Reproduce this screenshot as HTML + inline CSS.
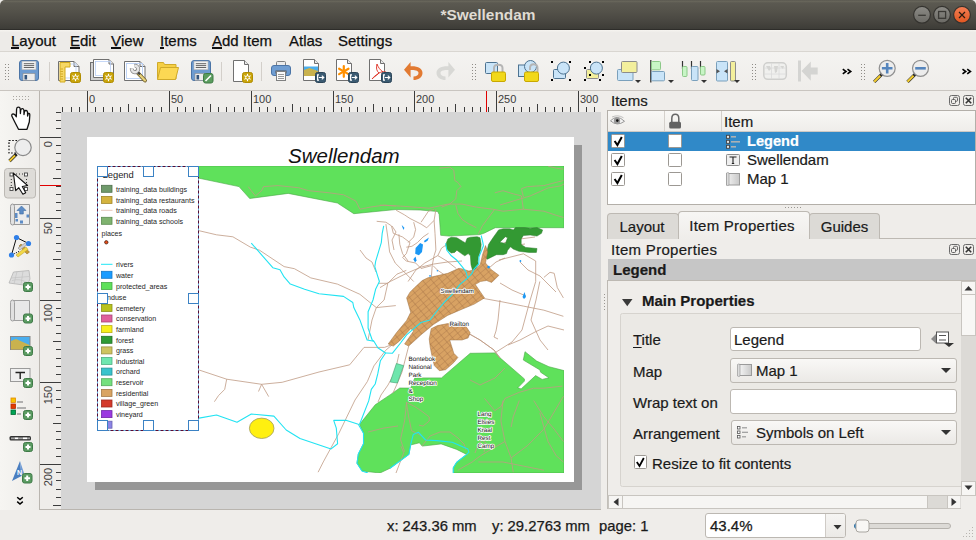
<!DOCTYPE html>
<html><head><meta charset="utf-8">
<style>
*{box-sizing:border-box;margin:0;padding:0}
html,body{width:976px;height:540px;overflow:hidden;background:#efedea;font-family:"Liberation Sans",sans-serif;color:#3c3c3c;position:relative}
.a{position:absolute}
#title{left:0;top:0;width:976px;height:30px;background:linear-gradient(#5a5850 0%,#67655a 5%,#5b5951 10%,#55534b 35%,#4a4842 68%,#3d3c37 100%);border-bottom:1px solid #2e2d2a;border-radius:5px 5px 0 0}
#title .t{left:0;width:976px;top:6px;text-align:center;font-weight:bold;font-size:15.4px;color:#dfdbd2;letter-spacing:0}
.wb{width:17px;height:17px;border-radius:50%;top:6px;border:1px solid #3a3935}
#menu{left:0;top:30px;width:976px;height:22px;background:linear-gradient(#f6f4f0,#edebe8 12%,#edebe8);border-bottom:1px solid #d9d6d1}
#menu span{position:absolute;top:2px;font-size:15px;color:#101010;-webkit-text-stroke:0.25px #101010}
#menu u{text-decoration:none;border-bottom:2px solid #101010;display:inline-block;line-height:12px}
#tb{left:0;top:52px;width:976px;height:38px;background:linear-gradient(#f4f3f1,#efedea)}
#lb{left:0;top:90px;width:39px;height:420px;background:linear-gradient(90deg,#f6f5f2,#eeece9)}
.rt{font-family:"Liberation Sans";font-size:11px;fill:#3c3c3c}
#status{left:0;top:510px;width:976px;height:30px;background:#efedea}
#status span{position:absolute;top:8px;font-size:14.8px;color:#1a1a1a;-webkit-text-stroke:0.25px #1a1a1a}
.pt{font-size:15px;color:#1a1a1a;line-height:18px;-webkit-text-stroke:0.2px #1a1a1a}
.tx{font-size:15px;color:#1a1a1a;line-height:18px;white-space:nowrap;-webkit-text-stroke:0.2px currentColor}
.tab{-webkit-text-stroke:0.2px #1a1a1a;height:26px;border:1px solid #bdb9b3;border-bottom:none;border-radius:4px 4px 0 0;background:#dcdad6;font-size:15px;color:#1a1a1a;text-align:center;line-height:25px}
.tab.act{height:28px;background:linear-gradient(#f7f6f4,#efedea);line-height:27px;z-index:2;letter-spacing:0.25px;text-indent:-4px}
.inp{background:#fff;border:1px solid #bcb8b2;border-radius:3px}
.cmb{background:linear-gradient(#f9f8f6,#ebe9e6);border:1px solid #bcb8b2;border-radius:3px}
</style></head><body>
<div id="title" class="a"><div class="t a">*Swellendam</div>
<svg class="a" style="left:900px;top:0" width="76" height="30">
<defs><linearGradient id="gbtn" x1="0" y1="0" x2="0" y2="1"><stop offset="0" stop-color="#8c8b86"/><stop offset="1" stop-color="#6a6964"/></linearGradient>
<linearGradient id="obtn" x1="0" y1="0" x2="0" y2="1"><stop offset="0" stop-color="#f57f55"/><stop offset="1" stop-color="#e05620"/></linearGradient></defs>
<circle cx="22" cy="14.8" r="8.4" fill="url(#gbtn)" stroke="#34332f" stroke-width="1.2"/>
<line x1="18.2" y1="15.3" x2="25.8" y2="15.3" stroke="#3a3935" stroke-width="1.3"/>
<circle cx="42" cy="14.8" r="8.4" fill="url(#gbtn)" stroke="#34332f" stroke-width="1.2"/>
<rect x="38.6" y="11.5" width="7" height="6.8" fill="none" stroke="#3a3935" stroke-width="1.3"/>
<circle cx="62" cy="14.8" r="8.4" fill="url(#obtn)" stroke="#34332f" stroke-width="1.2"/>
<path d="M59 12 L65 18 M65 12 L59 18" stroke="#2a1a10" stroke-width="1.2"/>
</svg>
</div>
<div id="menu" class="a">
<span style="left:11px"><u>L</u>ayout</span>
<span style="left:70px"><u>E</u>dit</span>
<span style="left:111px"><u>V</u>iew</span>
<span style="left:160px"><u>I</u>tems</span>
<span style="left:212px"><u>A</u>dd Item</span>
<span style="left:289px">Atlas</span>
<span style="left:338px">Settings</span>
</div>
<div id="tb" class="a"></div>
<div id="lb" class="a"></div>
<!-- rulers + canvas -->
<svg class="a" style="left:0;top:0" width="976" height="540">
<rect x="39" y="90" width="562" height="420" fill="#efedea"/>
<line x1="39.5" y1="90" x2="39.5" y2="510" stroke="#b9b5af"/>
<line x1="0" y1="90.5" x2="976" y2="90.5" stroke="#c9c5c0"/>
<line x1="40" y1="509.5" x2="601" y2="509.5" stroke="#b9b5af"/>
<rect x="61" y="112" width="540" height="397" fill="#d5d5d5"/>
<rect x="95" y="145" width="487" height="345" fill="#979797"/>
<rect x="87" y="137" width="487" height="345" fill="#ffffff"/>
<line x1="62.5" y1="107" x2="62.5" y2="112" stroke="#3c3c3c"/>
<line x1="71.5" y1="107" x2="71.5" y2="112" stroke="#3c3c3c"/>
<line x1="79.5" y1="107" x2="79.5" y2="112" stroke="#3c3c3c"/>
<line x1="87.5" y1="91" x2="87.5" y2="112" stroke="#3c3c3c" stroke-width="1"/>
<text x="89" y="103" class="rt">0</text>
<line x1="95.5" y1="107" x2="95.5" y2="112" stroke="#3c3c3c"/>
<line x1="103.5" y1="107" x2="103.5" y2="112" stroke="#3c3c3c"/>
<line x1="112.5" y1="107" x2="112.5" y2="112" stroke="#3c3c3c"/>
<line x1="120.5" y1="107" x2="120.5" y2="112" stroke="#3c3c3c"/>
<line x1="128.5" y1="104" x2="128.5" y2="112" stroke="#3c3c3c"/>
<line x1="136.5" y1="107" x2="136.5" y2="112" stroke="#3c3c3c"/>
<line x1="144.5" y1="107" x2="144.5" y2="112" stroke="#3c3c3c"/>
<line x1="152.5" y1="107" x2="152.5" y2="112" stroke="#3c3c3c"/>
<line x1="161.5" y1="107" x2="161.5" y2="112" stroke="#3c3c3c"/>
<line x1="169.5" y1="91" x2="169.5" y2="112" stroke="#3c3c3c" stroke-width="1"/>
<text x="171" y="103" class="rt">50</text>
<line x1="177.5" y1="107" x2="177.5" y2="112" stroke="#3c3c3c"/>
<line x1="185.5" y1="107" x2="185.5" y2="112" stroke="#3c3c3c"/>
<line x1="193.5" y1="107" x2="193.5" y2="112" stroke="#3c3c3c"/>
<line x1="202.5" y1="107" x2="202.5" y2="112" stroke="#3c3c3c"/>
<line x1="210.5" y1="104" x2="210.5" y2="112" stroke="#3c3c3c"/>
<line x1="218.5" y1="107" x2="218.5" y2="112" stroke="#3c3c3c"/>
<line x1="226.5" y1="107" x2="226.5" y2="112" stroke="#3c3c3c"/>
<line x1="234.5" y1="107" x2="234.5" y2="112" stroke="#3c3c3c"/>
<line x1="243.5" y1="107" x2="243.5" y2="112" stroke="#3c3c3c"/>
<line x1="251.5" y1="91" x2="251.5" y2="112" stroke="#3c3c3c" stroke-width="1"/>
<text x="253" y="103" class="rt">100</text>
<line x1="259.5" y1="107" x2="259.5" y2="112" stroke="#3c3c3c"/>
<line x1="267.5" y1="107" x2="267.5" y2="112" stroke="#3c3c3c"/>
<line x1="275.5" y1="107" x2="275.5" y2="112" stroke="#3c3c3c"/>
<line x1="283.5" y1="107" x2="283.5" y2="112" stroke="#3c3c3c"/>
<line x1="292.5" y1="104" x2="292.5" y2="112" stroke="#3c3c3c"/>
<line x1="300.5" y1="107" x2="300.5" y2="112" stroke="#3c3c3c"/>
<line x1="308.5" y1="107" x2="308.5" y2="112" stroke="#3c3c3c"/>
<line x1="316.5" y1="107" x2="316.5" y2="112" stroke="#3c3c3c"/>
<line x1="324.5" y1="107" x2="324.5" y2="112" stroke="#3c3c3c"/>
<line x1="333.5" y1="91" x2="333.5" y2="112" stroke="#3c3c3c" stroke-width="1"/>
<text x="335" y="103" class="rt">150</text>
<line x1="341.5" y1="107" x2="341.5" y2="112" stroke="#3c3c3c"/>
<line x1="349.5" y1="107" x2="349.5" y2="112" stroke="#3c3c3c"/>
<line x1="357.5" y1="107" x2="357.5" y2="112" stroke="#3c3c3c"/>
<line x1="365.5" y1="107" x2="365.5" y2="112" stroke="#3c3c3c"/>
<line x1="373.5" y1="104" x2="373.5" y2="112" stroke="#3c3c3c"/>
<line x1="382.5" y1="107" x2="382.5" y2="112" stroke="#3c3c3c"/>
<line x1="390.5" y1="107" x2="390.5" y2="112" stroke="#3c3c3c"/>
<line x1="398.5" y1="107" x2="398.5" y2="112" stroke="#3c3c3c"/>
<line x1="406.5" y1="107" x2="406.5" y2="112" stroke="#3c3c3c"/>
<line x1="414.5" y1="91" x2="414.5" y2="112" stroke="#3c3c3c" stroke-width="1"/>
<text x="416" y="103" class="rt">200</text>
<line x1="423.5" y1="107" x2="423.5" y2="112" stroke="#3c3c3c"/>
<line x1="431.5" y1="107" x2="431.5" y2="112" stroke="#3c3c3c"/>
<line x1="439.5" y1="107" x2="439.5" y2="112" stroke="#3c3c3c"/>
<line x1="447.5" y1="107" x2="447.5" y2="112" stroke="#3c3c3c"/>
<line x1="455.5" y1="104" x2="455.5" y2="112" stroke="#3c3c3c"/>
<line x1="464.5" y1="107" x2="464.5" y2="112" stroke="#3c3c3c"/>
<line x1="472.5" y1="107" x2="472.5" y2="112" stroke="#3c3c3c"/>
<line x1="480.5" y1="107" x2="480.5" y2="112" stroke="#3c3c3c"/>
<line x1="488.5" y1="107" x2="488.5" y2="112" stroke="#3c3c3c"/>
<line x1="496.5" y1="91" x2="496.5" y2="112" stroke="#3c3c3c" stroke-width="1"/>
<text x="498" y="103" class="rt">250</text>
<line x1="504.5" y1="107" x2="504.5" y2="112" stroke="#3c3c3c"/>
<line x1="513.5" y1="107" x2="513.5" y2="112" stroke="#3c3c3c"/>
<line x1="521.5" y1="107" x2="521.5" y2="112" stroke="#3c3c3c"/>
<line x1="529.5" y1="107" x2="529.5" y2="112" stroke="#3c3c3c"/>
<line x1="537.5" y1="104" x2="537.5" y2="112" stroke="#3c3c3c"/>
<line x1="545.5" y1="107" x2="545.5" y2="112" stroke="#3c3c3c"/>
<line x1="554.5" y1="107" x2="554.5" y2="112" stroke="#3c3c3c"/>
<line x1="562.5" y1="107" x2="562.5" y2="112" stroke="#3c3c3c"/>
<line x1="570.5" y1="107" x2="570.5" y2="112" stroke="#3c3c3c"/>
<line x1="578.5" y1="91" x2="578.5" y2="112" stroke="#3c3c3c" stroke-width="1"/>
<text x="580" y="103" class="rt">300</text>
<line x1="586.5" y1="107" x2="586.5" y2="112" stroke="#3c3c3c"/>
<line x1="594.5" y1="107" x2="594.5" y2="112" stroke="#3c3c3c"/>
<line x1="56" y1="112.5" x2="61" y2="112.5" stroke="#3c3c3c"/>
<line x1="56" y1="120.5" x2="61" y2="120.5" stroke="#3c3c3c"/>
<line x1="56" y1="128.5" x2="61" y2="128.5" stroke="#3c3c3c"/>
<line x1="40" y1="137.5" x2="61" y2="137.5" stroke="#3c3c3c"/>
<text transform="translate(52,141) rotate(-90)" text-anchor="end" class="rt">0</text>
<line x1="56" y1="145.5" x2="61" y2="145.5" stroke="#3c3c3c"/>
<line x1="56" y1="153.5" x2="61" y2="153.5" stroke="#3c3c3c"/>
<line x1="56" y1="161.5" x2="61" y2="161.5" stroke="#3c3c3c"/>
<line x1="56" y1="169.5" x2="61" y2="169.5" stroke="#3c3c3c"/>
<line x1="53" y1="178.5" x2="61" y2="178.5" stroke="#3c3c3c"/>
<line x1="56" y1="186.5" x2="61" y2="186.5" stroke="#3c3c3c"/>
<line x1="56" y1="194.5" x2="61" y2="194.5" stroke="#3c3c3c"/>
<line x1="56" y1="202.5" x2="61" y2="202.5" stroke="#3c3c3c"/>
<line x1="56" y1="210.5" x2="61" y2="210.5" stroke="#3c3c3c"/>
<line x1="40" y1="218.5" x2="61" y2="218.5" stroke="#3c3c3c"/>
<text transform="translate(52,222) rotate(-90)" text-anchor="end" class="rt">50</text>
<line x1="56" y1="227.5" x2="61" y2="227.5" stroke="#3c3c3c"/>
<line x1="56" y1="235.5" x2="61" y2="235.5" stroke="#3c3c3c"/>
<line x1="56" y1="243.5" x2="61" y2="243.5" stroke="#3c3c3c"/>
<line x1="56" y1="251.5" x2="61" y2="251.5" stroke="#3c3c3c"/>
<line x1="53" y1="259.5" x2="61" y2="259.5" stroke="#3c3c3c"/>
<line x1="56" y1="268.5" x2="61" y2="268.5" stroke="#3c3c3c"/>
<line x1="56" y1="276.5" x2="61" y2="276.5" stroke="#3c3c3c"/>
<line x1="56" y1="284.5" x2="61" y2="284.5" stroke="#3c3c3c"/>
<line x1="56" y1="292.5" x2="61" y2="292.5" stroke="#3c3c3c"/>
<line x1="40" y1="300.5" x2="61" y2="300.5" stroke="#3c3c3c"/>
<text transform="translate(52,304) rotate(-90)" text-anchor="end" class="rt">100</text>
<line x1="56" y1="308.5" x2="61" y2="308.5" stroke="#3c3c3c"/>
<line x1="56" y1="317.5" x2="61" y2="317.5" stroke="#3c3c3c"/>
<line x1="56" y1="325.5" x2="61" y2="325.5" stroke="#3c3c3c"/>
<line x1="56" y1="333.5" x2="61" y2="333.5" stroke="#3c3c3c"/>
<line x1="53" y1="341.5" x2="61" y2="341.5" stroke="#3c3c3c"/>
<line x1="56" y1="349.5" x2="61" y2="349.5" stroke="#3c3c3c"/>
<line x1="56" y1="358.5" x2="61" y2="358.5" stroke="#3c3c3c"/>
<line x1="56" y1="366.5" x2="61" y2="366.5" stroke="#3c3c3c"/>
<line x1="56" y1="374.5" x2="61" y2="374.5" stroke="#3c3c3c"/>
<line x1="40" y1="382.5" x2="61" y2="382.5" stroke="#3c3c3c"/>
<text transform="translate(52,386) rotate(-90)" text-anchor="end" class="rt">150</text>
<line x1="56" y1="390.5" x2="61" y2="390.5" stroke="#3c3c3c"/>
<line x1="56" y1="399.5" x2="61" y2="399.5" stroke="#3c3c3c"/>
<line x1="56" y1="407.5" x2="61" y2="407.5" stroke="#3c3c3c"/>
<line x1="56" y1="415.5" x2="61" y2="415.5" stroke="#3c3c3c"/>
<line x1="53" y1="423.5" x2="61" y2="423.5" stroke="#3c3c3c"/>
<line x1="56" y1="431.5" x2="61" y2="431.5" stroke="#3c3c3c"/>
<line x1="56" y1="439.5" x2="61" y2="439.5" stroke="#3c3c3c"/>
<line x1="56" y1="448.5" x2="61" y2="448.5" stroke="#3c3c3c"/>
<line x1="56" y1="456.5" x2="61" y2="456.5" stroke="#3c3c3c"/>
<line x1="40" y1="464.5" x2="61" y2="464.5" stroke="#3c3c3c"/>
<text transform="translate(52,468) rotate(-90)" text-anchor="end" class="rt">200</text>
<line x1="56" y1="472.5" x2="61" y2="472.5" stroke="#3c3c3c"/>
<line x1="56" y1="480.5" x2="61" y2="480.5" stroke="#3c3c3c"/>
<line x1="56" y1="489.5" x2="61" y2="489.5" stroke="#3c3c3c"/>
<line x1="56" y1="497.5" x2="61" y2="497.5" stroke="#3c3c3c"/>
<line x1="53" y1="505.5" x2="61" y2="505.5" stroke="#3c3c3c"/>
<line x1="486.5" y1="91" x2="486.5" y2="112" stroke="#e00000"/>
<line x1="40" y1="185.5" x2="61" y2="185.5" stroke="#e00000"/>
<defs>
<clipPath id="mapclip"><rect x="97" y="166" width="467" height="307"/></clipPath>
<pattern id="town" patternUnits="userSpaceOnUse" width="7" height="4.5" patternTransform="rotate(-40)"><rect width="7" height="4.5" fill="#d8a263"/><path d="M0 0.3 H7 M3.5 0 V4.5" stroke="#a87448" stroke-width="0.45"/></pattern>
</defs>
<g clip-path="url(#mapclip)">
<rect x="97" y="166" width="467" height="307" fill="#fff"/>
<!-- protected area top -->
<path d="M97 166 H564 V227.7 H495.3 L489.2 230.7 L484.5 233 L480 234.6 L449.2 236.1 L440.7 235.3 L439.2 214.6 L437.7 211.5 L420 210 L396 209.5 L353.8 213.7 L337.4 203 L288.2 193.4 L249.7 198.5 L239 186.6 L198 178 L97 160 Z" fill="#5fe15b" stroke="#4aa847" stroke-width="0.6"/>
<!-- protected area bottom -->
<path d="M357 463.2 L358.3 454 L363.5 443.7 L363.5 433.3 L359.6 424.3 L375.2 404.8 L390.7 394.4 L399.8 388 L410.7 388.1 L414.8 377.9 L441.5 377.9 L470.2 353.3 L494.8 352.9 L500 357.8 L524.4 378.9 L524.4 381.1 L517.8 387.8 L521.1 388.9 L535.6 375.6 L542.2 379.4 L548.9 377.8 L540.6 372.2 L540 370 L523.3 360 L525 351.7 L536.7 361.1 L548.9 366.7 L564 370.6 V473 H453.3 L453.3 467.8 L456.7 462.2 L466.7 454.4 L456.7 449.4 L441.1 443.9 L432.2 445 L422.2 446.1 L419.4 442.8 L410.6 445 L408.9 454.4 L390 468.3 L380 473 L362 471 Z" fill="#5fe15b" stroke="#4aa847" stroke-width="0.6"/>
<!-- roads -->
<g fill="none" stroke="#bf9a84" stroke-width="0.8" stroke-linejoin="round">
<path d="M199 230.7 L216.5 234.8 L232.9 236.8 L250.3 247.1 L259.5 250.2 L284.1 266.6 L294.4 268.7 L310.8 277.9 L337.4 284.1 L359.9 294.3 L376.3 307.6 L395.8 305.6"/>
<path d="M199.1 370 L226.7 379.2 L261.6 384.3 L282.1 382.3 L319 372 L349.7 364.8 L364 347.4 L384.5 347.4 L392.7 344.3"/>
<path d="M226.7 379.2 L224.7 389.4 L218.5 395.6 L214.4 401.7"/><path d="M261.6 384.3 L258.5 391.5"/><path d="M261.6 384.3 L268.7 396.6"/>
<path d="M376.7 221.3 L385.9 222.2 L391.5 225.9 L393.3 233.3 L402.6 237 L410 242.6 L406.3 253.7 L402.6 257.4 L406.3 261.1 L415.6 263 L421.1 268.5 L431.3 265.7"/>
<path d="M396.1 210.2 L404.4 214.8 L410 218.5 L421.1 224.1 L426.7 227.8 L434.1 220.4 L435.9 209.3"/>
<path d="M434.1 220.4 L435 233.3 L435.9 250 L434.1 255.6 L432.2 265.7 L431.3 277.8 L430.4 281.5"/>
<path d="M385.9 224.1 L387.8 237 L389.6 251.9 L395.2 263 L402.6 270.4 L410 277.8 L413.7 281.5"/>
<path d="M378.5 283.3 L387.8 283.3 L397 274.1 L406.3 270.4"/>
<path d="M408.1 281.5 L415.6 270.4 L424.8 263 L437.8 255.6 L447 261.1 L456.3 268.5"/>
<path d="M387.8 283.3 L384.1 300 L376.3 307.6 L372 320 L368 340"/>
<path d="M380 287.6 L390.2 281.5 L406.6 273.3 L421 267.1 L433.3 264.1 L447.6 262 L462 261"/>
<path d="M480.4 297.9 L503 302 L523.4 306.1 L543.9 310.2 L563.4 316.3"/>
<path d="M498.9 260 L523.4 253.8 L535.7 261 L535.7 281.5 L529.6 302 L522 330 L512 342 L494.8 352.9"/>
<path d="M543.9 277.4 L550 272.3 L554.2 273.3 L557.3 287.6 L563.4 297.9"/>
<path d="M539.8 281.5 L536 300 L531 320 L540 340 L548 350"/>
<path d="M500 300 L498 320 L496 331 L494 337 L498 339"/>
<path d="M408.7 346.1 L402 372 L397 384 L393 393"/>
<path d="M430 338 L440 330 L455 324"/>
<path d="M466 332 L480 340 L494 350 L500 358"/>
<path d="M439.4 168.2 L449.7 167.2 L453.8 170.2 L454.8 180.5 L457.9 182.5 L460.9 186.6 L456.8 190.7 L455.8 198.9 L449.7 204.1 L441.5 207.1"/>
<path d="M380 205.1 L400.5 206.1 L429.2 208.2 L447.6 204.1 L462 204.1 L476.3 207.1 L492.7 209.2 L503 211.2 L523.4 209.2 L543.9 211.2 L556.2 215.3 L563.4 217.4"/>
<path d="M523.4 196.9 L521.4 188.7 L527.5 186.6 L543.9 185.6 L563.4 180.5"/>
<path d="M494.8 209.2 L488.6 217.4 L482.5 225.6 L478.4 233.8"/>
<path d="M455.8 205.1 L457.9 213.3 L462 219.4 L468.1 223.5 L476.3 227.6"/>
<path d="M548 166.1 L556.2 168.2 L563.4 169.2"/>
<path d="M494.8 192.8 L503 190.7 L513.2 193.8 L521.4 195.9 L523.4 209.2"/>
<path d="M248.3 186.6 L251.3 190.7 L255.4 195.9 L261.6 190.7 L263.6 186.6 L278 185.6 L298.5 187.7 L308.7 190.7 L329.2 192.8 L343.5 194.8 L355.8 201 L359.9 209.2 L370.2 207.1 L384.5 205.1 L395.8 206.1"/>
<path d="M406.6 402.5 L414.8 406.6 L421 410.7 L429.2 416.9 L429.2 421 L423 426.1 L418.9 425.1"/>
<path d="M406.6 402.5 L404.6 421 L400.5 439.4 L404.6 451.7"/>
<path d="M484.5 398.4 L494.8 410.7 L500.9 406.6 L505 398.4 L519.3 392.3 L533.7 388.2 L543.9 388.2 L562.4 386.1"/>
<path d="M503 400.5 L500.9 421 L505 441.5 L511.1 457.9 L513.2 472.2"/>
<path d="M511.1 457.9 L527.5 445.6 L543.9 429.2 L563.4 396.4"/>
<path d="M533.7 400.5 L543.9 416.9 L554.2 429.2 L563.4 441.5"/>
<path d="M519.3 400.5 L513.2 416.9 L511.1 427.1"/>
<path d="M478.4 462 L503 462 L523.4 466.1 L543.9 470.2"/>
<path d="M539.8 412.8 L548 441.5 L556.2 455.8 L563.4 462"/>
<path d="M457.9 470.2 L472.2 462 L480.4 455.8 L490 450 L505 441.5"/>
<path d="M406.3 402.2 L408.9 417.8 L411.5 430.7 L421.9 435.9"/>
<path d="M401.1 446.3 L403.7 452.8 L396 473"/>
<path d="M422 446 L430 436 L440 432 L450 432 L458 438 L464 444 L466 450"/>
<path d="M475 453 L478 445 L482 440 L486 443 L484 452"/>
<path d="M392.7 344.3 L385.6 350.4 L373.9 365.9 L367.4 381.5 L355 400 L338.9 433.3 L323.3 461.9 L318.1 472.2"/>
<path d="M399 354 L395 372 L388 385 L381 395 L378 402"/>
<path d="M430 338 L440 330 L455 324"/>
<path d="M466 332 L480 340 L494 350 L500 358"/>
<path d="M500 205 L530 196 L548 188 L560 186 L564 184"/>
<path d="M504 243 L520 239 L535 237"/>
<path d="M499 253 L510 246 L525 244"/>
<path d="M470 380 L480 385 L495 378 L505 368"/>
<path d="M368 432 L384 428 L398 426"/>
<path d="M398.9 234.3 L399.8 244.4 L402.6 253.7 L408.1 261.1"/>
<path d="M421.1 222.2 L428.5 211.1 L434.1 209.3"/>
<path d="M413.7 222.2 L415.6 229.6 L413.7 237 L408.1 242.6"/>
<path d="M428.5 233.3 L423 237 L417.4 242.6 L411.9 246.3 L406.3 247.2"/>
<path d="M437.8 255.6 L441.5 248.1 L447 244.4"/>
<path d="M433.1 265.7 L437.8 270.4 L443.3 274.1 L448 277.8"/>
<path d="M392 226 L396 232 L392 240 L394 250"/>
<path d="M360 250 L366 258 L372 262 L376 272"/>
<path d="M520 262 L528 270 L540 276 L548 284 L556 292"/>
<path d="M500 283 L512 290 L526 296"/>
<path d="M489 268 L496 262 L505 258"/>
<path d="M564 330 L548 326 L535 332 L520 340 L508 345"/>
</g>
<!-- forest -->
<g fill="#339933" stroke="#2a7a2a" stroke-width="0.5" fill-rule="evenodd">
<path d="M446.2 243.4 L447.9 238.9 L451.3 237.2 L456.9 237.8 L462.5 241.2 L465.4 242.9 L467.1 238.3 L470.4 237.2 L477.2 236.7 L480 237.8 L481.2 244.5 L480.6 250.2 L478.3 257 L477.8 261.5 L478.3 264.8 L475 269.4 L472.7 270.5 L471 264.8 L470.4 255.8 L468.2 253.6 L464.8 255.8 L461.4 253.6 L456.9 250.2 L454.7 252.4 L451.3 253 L447.9 250.2 L446.2 246.8 Z"/>
<path d="M486.2 254.7 L488.5 244.5 L493 237.8 L498.6 229.9 L503.1 228.8 L509.9 228.8 L513.3 229.9 L515.5 227.6 L524.6 227.6 L530.2 228.2 L537 227.6 L542.6 229.9 L541.5 233.3 L537 236.1 L530.2 235 L523.4 235.5 L521.2 238.9 L521.2 244.5 L525.7 247.4 L537 248.5 L536.4 252.4 L529.1 252.4 L518.9 251.3 L513.3 249.1 L510.5 246.8 L507.6 250.2 L506.5 253.6 L503.1 254.7 L496.4 254.7 L491.9 256.9 L487.4 259.2 L485.7 258.1 Z M499.8 242.3 L505.4 236.7 L507.6 237.8 L505.4 243.4 Z"/>
</g>
<!-- town -->
<g fill="url(#town)" stroke="#9a6e40" stroke-width="0.5">
<path d="M406.6 297.9 L410 292.2 L414.4 287.8 L422.2 280.6 L427.8 277.8 L437.8 275.6 L447.8 273.3 L458.9 268.3 L462.2 268.9 L468.9 271.1 L475.6 269.4 L480.4 264 L482.5 254.8 L485.5 245.6 L487.6 251.8 L485.5 263 L490.7 269.2 L498.9 275.3 L491.7 282.5 L486.6 280.5 L480.4 281.5 L475.3 284.5 L484.5 297.9 L474.3 304.1 L462 309.2 L447.6 315.4 L433.3 324.6 L421 334.8 L408.7 346.1 L404.6 344 L413.8 330.7 L410.7 328.7 L399.5 341 L393.3 346.1 L388.2 344 L396.4 332.8 L406.6 320.5 L410.7 312.3 Z"/>
<path d="M431.2 328.7 L437.4 325.6 L447.6 323.6 L466.1 326.6 L470.2 332.8 L468.1 337.9 L462 340 L449.7 340 L453.8 353.3 L457.9 357.4 L453.8 362.5 L445.6 369.7 L439.4 370.7 L434.3 365.6 L432.3 357.4 L430.2 347.1 L429.2 338.9 Z"/>
</g>
<!-- industrial -->
<path d="M390.2 382 L396.4 363.5 L403.6 365.6 L397.4 383 Z" fill="#6fe6ad" stroke="#3f9f6e" stroke-width="0.6"/>
<!-- water -->
<g fill="#1b98f5">
<path d="M415.6 248.1 L420.2 243 L423 244.4 L422 251.9 L418.9 255.2 L415.2 253.7 Z"/>
<path d="M423.9 241.1 L428.9 237.4 L427.6 240.7 L424.8 242.6 Z"/>
<path d="M413.3 259.3 L415.6 256.5 L416.5 260.2 L415.2 262.6 Z"/>
<path d="M401.7 225 L404.4 227.8 L403.5 230 L402.5 227.5 Z"/>
<circle cx="430" cy="275.9" r="0.8"/><circle cx="437.4" cy="270.7" r="0.8"/><circle cx="488.6" cy="267.1" r="1.3"/><circle cx="520.4" cy="261" r="0.9"/>
<path d="M524.5 292 L526 297 L524 299 L522.5 297 Z"/>
</g>
<!-- rivers -->
<g fill="none" stroke="#22e3f2" stroke-width="1.1" stroke-linejoin="round">
<path d="M251.3 243.1 L257.5 250.2 L272.8 267.7 L280 269.7 L284.1 276.9 L290.3 284.1 L304.6 289.2 L319 293.7 L343.5 296.4 L352.8 302.5 L353.8 307.6 L359.9 319.9 L367.1 340 L373.9 341.3 L377.8 347.8 L385.6 353 L380.4 360.7 L377.8 373.7 L375.2 384 L371.3 389.3 L368.7 400.9 L359.6 424.3"/>
<path d="M383.7 225.9 L382.2 233.3 L381.3 242.6 L378.5 251.9 L375.7 261.1 L374.8 266.7 L377.6 275.9 L379.4 281.5 L375.7 288.9 L373 300 L368.1 311.7 L368.1 328.1 L372.2 340 L373.9 341.3"/>
<path d="M445.6 243.4 L446.8 250.2 L451.3 255.8 L456.9 260.3 L462.5 267.1 L465.9 271.6 L467.8 277.8 L460 284.4 L452.2 294.4 L444.4 302.2 L437.8 310 L430 320 L421 322.5 L413.8 328.7 L406.6 334.8 L400.5 343 L392.3 353.3 L385.6 353"/>
<path d="M481.2 235.5 L482.8 242.3 L483.4 245.7 L481.7 250.2 L478.9 257 L478.9 263.7 L473.8 269.4 L471.6 273.9 L467.8 277.8"/>
<path d="M199.1 418.1 L216.5 415 L237 422.2 L251.3 414 L273.9 416.1 L286.2 430 L300 438.5 L331.1 448.9 L337.6 443.7 L336.3 428.1 L333.7 420.4 L346.7 420.4 L358.3 424.3 L363.5 433.3 L363.5 443.7 L358.3 454 L357 463.2 L362 471 L368 473"/>
<path d="M390 468.3 L408.9 454.4 L410.6 445 L413.3 434.4 L418.3 432.2 L425.6 440 L436.7 440.6 L452.2 442.2 L467.8 448.9 L468.9 452.2 L466.7 454.4 L456.7 462.2 L453.3 467.8 L453.3 473"/>
</g>
<!-- yellow ellipse -->
<ellipse cx="261.7" cy="428.3" rx="12.3" ry="10.2" fill="#fff010" stroke="#a09a62" stroke-width="0.8"/>
<!-- labels -->
<g font-family="Liberation Sans" font-size="6.3" text-rendering="geometricPrecision" fill="#111" stroke="#fff" stroke-width="1.6" paint-order="stroke" stroke-linejoin="round">
<text x="440.6" y="292.8" font-size="6.1">Swellendam</text>
<text x="449.5" y="326">Railton</text>
<text x="408.5" y="360.5">Bontebok</text>
<text x="408.5" y="368.5">National</text>
<text x="408.5" y="376.5">Park</text>
<text x="408.5" y="384.5">Reception</text>
<text x="408.5" y="392.5">&amp;</text>
<text x="408.5" y="400.5">Shop</text>
<text x="477.5" y="415.5">Lang</text>
<text x="477.5" y="423.5">Elsies</text>
<text x="477.5" y="431.5">Kraal</text>
<text x="477.5" y="439.5">Rest</text>
<text x="477.5" y="447.5">Camp</text>
</g>
</g>
<text x="288" y="163.2" font-family="Liberation Sans" font-style="italic" font-size="20.5" fill="#111">Swellendam</text>

<rect x="97.5" y="166.5" width="101" height="264" fill="#fff"/>
<g font-family="Liberation Sans" font-size="7.1" fill="#1e1e1e">
<text x="102.5" y="177.8" font-size="9.4" fill="#1e1e1e">Legend</text>
<rect x="101.5" y="185.3" width="10.5" height="7" fill="#6f9a6b" stroke="#4f6f4c" stroke-width="0.8"/>
<text x="116" y="191.6">training_data buildings</text>
<rect x="101.5" y="196.4" width="10.5" height="7" fill="#d4b33e" stroke="#a08628" stroke-width="0.8"/>
<text x="116" y="202.7">training_data restaurants</text>
<line x1="101" y1="210.3" x2="112.5" y2="210.3" stroke="#e2c0b0" stroke-width="0.9"/>
<text x="116" y="213.1">training_data roads</text>
<rect x="101.5" y="217.3" width="10.5" height="7" fill="#7fb36f" stroke="#5a8a4f" stroke-width="0.8"/>
<text x="116" y="223.6">training_data schools</text>
<text x="101.5" y="236.0">places</text>
<circle cx="106.3" cy="242.3" r="1.7" fill="#e8501a" stroke="#3a1a10" stroke-width="0.7"/>
<line x1="101" y1="264.3" x2="112.5" y2="264.3" stroke="#1ee6f5" stroke-width="1"/>
<text x="116" y="267.0">rivers</text>
<rect x="101.5" y="271.3" width="10.5" height="7" fill="#1b9cff" stroke="#1478c8" stroke-width="0.8"/>
<text x="116" y="277.6">water</text>
<rect x="101.5" y="282.5" width="10.5" height="7" fill="#5fe15b" stroke="#48a845" stroke-width="0.8"/>
<text x="116" y="288.8">protected_areas</text>
<text x="101.5" y="300.0">landuse</text>
<rect x="101.5" y="304.4" width="10.5" height="7" fill="#b8c21e" stroke="#8a9414" stroke-width="0.8"/>
<text x="116" y="310.7">cemetery</text>
<rect x="101.5" y="315.0" width="10.5" height="7" fill="#e0609c" stroke="#a84876" stroke-width="0.8"/>
<text x="116" y="321.3">conservation</text>
<rect x="101.5" y="325.6" width="10.5" height="7" fill="#f7ef1c" stroke="#b8b014" stroke-width="0.8"/>
<text x="116" y="331.9">farmland</text>
<rect x="101.5" y="336.3" width="10.5" height="7" fill="#2f9b35" stroke="#236f27" stroke-width="0.8"/>
<text x="116" y="342.6">forest</text>
<rect x="101.5" y="346.9" width="10.5" height="7" fill="#cfc45f" stroke="#9a9245" stroke-width="0.8"/>
<text x="116" y="353.2">grass</text>
<rect x="101.5" y="357.5" width="10.5" height="7" fill="#6fe6af" stroke="#4fae82" stroke-width="0.8"/>
<text x="116" y="363.8">industrial</text>
<rect x="101.5" y="368.1" width="10.5" height="7" fill="#38c3cc" stroke="#2a9298" stroke-width="0.8"/>
<text x="116" y="374.4">orchard</text>
<rect x="101.5" y="378.7" width="10.5" height="7" fill="#74e07e" stroke="#55a85d" stroke-width="0.8"/>
<text x="116" y="385.0">reservoir</text>
<rect x="101.5" y="389.4" width="10.5" height="7" fill="#d9a463" stroke="#a37a48" stroke-width="0.8"/>
<text x="116" y="395.7">residential</text>
<rect x="101.5" y="400.0" width="10.5" height="7" fill="#d43a2b" stroke="#9e2b20" stroke-width="0.8"/>
<text x="116" y="406.3">village_green</text>
<rect x="101.5" y="410.6" width="10.5" height="7" fill="#9b3ae0" stroke="#7229a8" stroke-width="0.8"/>
<text x="116" y="416.9">vineyard</text>
<rect x="101.5" y="421.2" width="10.5" height="7" fill="#8c84e6" stroke="#6a62b0" stroke-width="0.8"/>
</g>
<rect x="97" y="431" width="102" height="8" fill="#fff"/>
<rect x="97.5" y="166.5" width="101" height="264" fill="none" stroke="#6ec3f0" stroke-width="1"/>
<rect x="97.5" y="166.5" width="101" height="264" fill="none" stroke="#5a0a32" stroke-width="1" stroke-dasharray="3 2"/>
<rect x="97.5" y="166.5" width="10" height="10" fill="#fff" stroke="#3b82c4" stroke-width="1"/>
<rect x="143.5" y="166.5" width="10" height="10" fill="#fff" stroke="#3b82c4" stroke-width="1"/>
<rect x="188.5" y="166.5" width="10" height="10" fill="#fff" stroke="#3b82c4" stroke-width="1"/>
<rect x="97.5" y="293.5" width="10" height="10" fill="#fff" stroke="#3b82c4" stroke-width="1"/>
<rect x="188.5" y="293.5" width="10" height="10" fill="#fff" stroke="#3b82c4" stroke-width="1"/>
<rect x="97.5" y="420.5" width="10" height="10" fill="#fff" stroke="#3b82c4" stroke-width="1"/>
<rect x="143.5" y="420.5" width="10" height="10" fill="#fff" stroke="#3b82c4" stroke-width="1"/>
<rect x="188.5" y="420.5" width="10" height="10" fill="#fff" stroke="#3b82c4" stroke-width="1"/>
</svg>
<svg class="a" style="left:0;top:0" width="976" height="540">
<defs>
<g id="dots6"><rect x="0" y="0" width="1" height="1"/><rect x="3" y="0" width="1" height="1"/><rect x="0" y="3" width="1" height="1"/><rect x="3" y="3" width="1" height="1"/><rect x="0" y="6" width="1" height="1"/><rect x="3" y="6" width="1" height="1"/><rect x="0" y="9" width="1" height="1"/><rect x="3" y="9" width="1" height="1"/><rect x="0" y="12" width="1" height="1"/><rect x="3" y="12" width="1" height="1"/><rect x="0" y="15" width="1" height="1"/><rect x="3" y="15" width="1" height="1"/></g>
<g id="gold"><rect x="0.5" y="0.5" width="10" height="10" rx="2" fill="#c9a40a" stroke="#b08c00"/><g stroke="#fff" stroke-width="1.1"><line x1="5.5" y1="1.8" x2="5.5" y2="9.2"/><line x1="2.3" y1="3.6" x2="8.7" y2="7.4"/><line x1="2.3" y1="7.4" x2="8.7" y2="3.6"/></g><circle cx="5.5" cy="5.5" r="1.8" fill="#c9a40a" stroke="#fff" stroke-width="0.9"/></g>
<g id="exp"><rect x="0.5" y="0.5" width="10" height="10" rx="2" fill="#3b5b72" stroke="#2c4558"/><path d="M4 2.8 H2.6 V8.2 H4" fill="none" stroke="#fff" stroke-width="1.2"/><path d="M3.8 5.5 H8.6 M6.8 3.6 L8.8 5.5 L6.8 7.4" fill="none" stroke="#fff" stroke-width="1.1"/></g>
<g id="page"><path d="M0.5 0.5 H11.5 L15.5 4.5 V21.5 H0.5 Z" fill="#fff" stroke="#707070"/><path d="M11.5 0.5 V4.5 H15.5" fill="#e8e8e8" stroke="#707070"/></g>
<g id="floppy"><rect x="0.5" y="0.5" width="19" height="20" rx="2.5" fill="#6d9bd0" stroke="#4b74a6"/><rect x="3" y="1.2" width="14" height="8.5" fill="#f2f2f2" stroke="#b5b5b5" stroke-width="0.6"/><g stroke="#555" stroke-width="0.9"><line x1="4.8" y1="3.7" x2="15.2" y2="3.7"/><line x1="4.8" y1="5.6" x2="15.2" y2="5.6"/><line x1="4.8" y1="7.5" x2="15.2" y2="7.5"/></g><rect x="4" y="13.5" width="12" height="7" fill="#ececec" stroke="#8c8c8c" stroke-width="0.6"/><rect x="5.5" y="15" width="2.6" height="4.5" fill="#34557d"/></g>
<g id="gplus"><rect x="0.5" y="0.5" width="9" height="9" rx="2" fill="#5b9b62" stroke="#3f7a47"/><path d="M5 2 V8 M2 5 H8" stroke="#fff" stroke-width="2"/></g>
</defs>
<!-- toolbar handles -->
<g fill="#8f8c87"><use href="#dots6" x="5" y="64"/><use href="#dots6" x="472" y="64"/><use href="#dots6" x="752" y="64"/><use href="#dots6" x="861" y="64"/></g>
<!-- separators -->
<g stroke="#d3cfca"><line x1="49.5" y1="62" x2="49.5" y2="81"/><line x1="221.5" y1="62" x2="221.5" y2="81"/><line x1="261.5" y1="62" x2="261.5" y2="81"/></g>
<!-- save -->
<use href="#floppy" x="19" y="60"/>
<!-- new from template -->
<g transform="translate(58,61)"><path d="M0.5 0.5 H16 L21 5.5 V19.5 H0.5 Z" fill="#fff" stroke="#707070"/><path d="M16 0.5 V5.5 H21" fill="#ececec" stroke="#707070"/><rect x="3" y="3" width="15" height="14" fill="none" stroke="#b8cff5" stroke-width="0.8"/><path d="M2 1.5 H12 V6 H7 V21 H2 Z" fill="#f6d865" stroke="#d2aa1e"/><g stroke="#c59a10" stroke-width="0.7"><line x1="2.5" y1="8" x2="5" y2="8"/><line x1="2.5" y1="10.5" x2="5" y2="10.5"/><line x1="2.5" y1="13" x2="5" y2="13"/><line x1="2.5" y1="15.5" x2="5" y2="15.5"/><line x1="2.5" y1="18" x2="5" y2="18"/></g></g>
<use href="#gold" x="70" y="72"/>
<!-- duplicate -->
<g transform="translate(90,59)"><rect x="0.5" y="3.5" width="18" height="18" fill="#d0d0d0" stroke="#707070"/><path d="M3.5 0.5 H19 L23.5 5 V18.5 H3.5 Z" fill="#fff" stroke="#707070"/><path d="M19 0.5 V5 H23.5" fill="#ececec" stroke="#707070"/><rect x="5.5" y="2.5" width="15" height="14" fill="none" stroke="#b8cff5" stroke-width="0.8"/></g>
<use href="#gold" x="103" y="72"/>
<!-- layout manager -->
<g transform="translate(124,61)"><path d="M0.5 0.5 H16 L21 5.5 V19.5 H0.5 Z" fill="#fff" stroke="#707070"/><path d="M16 0.5 V5.5 H21" fill="#ececec" stroke="#707070"/><rect x="2.5" y="2.5" width="16" height="15" fill="none" stroke="#b8cff5" stroke-width="0.9"/>
<line x1="12.5" y1="10.5" x2="21" y2="19.5" stroke="#6a5a28" stroke-width="3.8" stroke-linecap="round"/><line x1="12.5" y1="10.5" x2="21" y2="19.5" stroke="#e8d27a" stroke-width="2.3" stroke-linecap="round"/><path d="M10.44 4.85 A3.2 3.2 0 1 1 7.85 7.44" fill="none" stroke="#8a8a8a" stroke-width="4"/><path d="M10.44 4.85 A3.2 3.2 0 1 1 7.85 7.44" fill="none" stroke="#e6e6e6" stroke-width="2.4"/><line x1="14" y1="11.5" x2="16" y2="13.5" stroke="#444" stroke-width="2.2"/></g>
<!-- open folder -->
<g transform="translate(157,62)"><path d="M0.5 0.5 H6.5 L7.5 2.5 H19 V17 H0.5 Z" fill="#f5cf45" stroke="#d0aa2a"/><path d="M3.5 5.5 H21.5 L18.5 17.5 H0.5 Z" fill="#fcd853" stroke="#d0aa2a"/></g>
<!-- save as template -->
<use href="#floppy" x="191" y="60"/>
<g transform="translate(203,73)"><rect x="0.5" y="0.5" width="9.5" height="9.5" rx="2" fill="#5a9c5e" stroke="#3e7b45"/><line x1="2.5" y1="8" x2="8" y2="2.5" stroke="#fff" stroke-width="1.6"/></g>
<!-- add pages -->
<use href="#page" x="233" y="60"/>
<use href="#gold" x="242" y="72"/>
<!-- print -->
<g transform="translate(271,61)"><rect x="5.5" y="0.5" width="9" height="6" rx="1" fill="#ececec" stroke="#808080"/><rect x="0.5" y="4.5" width="19" height="10" rx="2.5" fill="#6f9dd2" stroke="#4b74a6"/><rect x="4.5" y="9.5" width="11" height="3" fill="#555"/><rect x="5.5" y="10.5" width="9" height="9" fill="#fafafa" stroke="#808080"/><g stroke="#808080" stroke-width="0.8"><line x1="7" y1="13.5" x2="13" y2="13.5"/><line x1="7" y1="15.5" x2="13" y2="15.5"/><line x1="7" y1="17.5" x2="13" y2="17.5"/></g></g>
<!-- export image -->
<use href="#page" x="303" y="59"/>
<g transform="translate(304,66.5)"><rect x="0" y="0" width="14" height="9.5" fill="#4aaeee"/><path d="M0 3.5 L5.5 1.5 L14 4.5 V9.5 H0 Z" fill="#c9b24e"/></g>
<use href="#exp" x="315" y="72"/>
<!-- export svg -->
<use href="#page" x="336" y="59"/>
<g stroke="#ff9000" stroke-width="2.2" stroke-linecap="round"><line x1="343.8" y1="66" x2="343.8" y2="76.8"/><line x1="339.1" y1="68.7" x2="348.5" y2="74.1"/><line x1="339.1" y1="74.1" x2="348.5" y2="68.7"/></g>
<use href="#exp" x="348" y="72"/>
<!-- export pdf -->
<use href="#page" x="369" y="59"/>
<path d="M377 64 C376 68 376.5 71 379 73 C376 75 373.5 77 372 79 M379 73 C381 72 383 71.5 386 72 M377 64 C378 67 380 70 383 72 M372 79 C375 76 378 74.5 379 73" fill="none" stroke="#e03c30" stroke-width="1"/>
<use href="#exp" x="381" y="72"/>
<!-- undo -->
<path d="M404 69.8 L410.6 62 V66.3 C418 66 422.5 68.5 422.5 73 C422.5 77.5 418 80 413.5 80 V76.5 C416.5 76.5 418.5 75 418.5 73 C418.5 71 416 69.8 410.6 70 V77.5 Z" fill="#e27a32"/>
<!-- redo (disabled) -->
<path d="M455 69.8 L448.4 62 V66.3 C441 66 436.5 68.5 436.5 73 C436.5 77.5 441 80 445.5 80 V76.5 C442.5 76.5 440.5 75 440.5 73 C440.5 71 443 69.8 448.4 70 V77.5 Z" fill="#d8d8d5"/>
<!-- lock -->
<g transform="translate(485,62)"><rect x="0.5" y="0.5" width="12" height="11" rx="1" fill="#c9e4f8" stroke="#4d7391"/><path d="M9 10 V6 C9 1.5 17.5 1.5 17.5 6 V10" fill="none" stroke="#b5b5b5" stroke-width="2"/><rect x="6.5" y="10" width="14" height="9.5" rx="1.5" fill="#f1d81a" stroke="#c9a800"/></g>
<!-- unlock -->
<g transform="translate(518,60)"><rect x="0.5" y="5" width="9" height="11.5" fill="#c9e4f8" stroke="#4d7391"/><circle cx="12.5" cy="6.5" r="6" fill="#c9e4f8" stroke="#4d7391"/><path d="M12 10 V8 C12 3 19.5 3 19.5 8 V12" fill="none" stroke="#b5b5b5" stroke-width="2"/><rect x="6.5" y="12" width="14" height="9.5" rx="1.5" fill="#f1d81a" stroke="#c9a800"/></g>
<!-- group -->
<g transform="translate(551,61)"><rect x="2.5" y="8.5" width="12" height="9" rx="1" fill="#c9e4f8" stroke="#4d7391"/><circle cx="12.4" cy="7.1" r="6" fill="#c9e4f8" stroke="#4d7391"/><g fill="#000"><rect x="0" y="0" width="2" height="2"/><rect x="18" y="0" width="2" height="2"/><rect x="0" y="18" width="2" height="2"/><rect x="18" y="18" width="2" height="2"/></g></g>
<!-- ungroup -->
<g transform="translate(584,61)"><rect x="2.5" y="8.5" width="12" height="9" rx="1" fill="#f3ef9c" stroke="#8c8c8c"/><circle cx="12.4" cy="7.1" r="6" fill="#c9e4f8" stroke="#4d7391"/><g fill="#000"><rect x="5" y="0" width="2" height="2"/><rect x="18" y="0" width="2" height="2"/><rect x="0" y="6" width="2" height="2"/><rect x="18" y="13" width="2" height="2"/><rect x="5" y="13" width="2" height="2"/><rect x="0" y="18" width="2" height="2"/><rect x="15" y="18" width="2" height="2"/></g></g>
<!-- raise -->
<g transform="translate(617,61)"><rect x="0.5" y="8.5" width="15.5" height="11" rx="1" fill="#c9e4f8" stroke="#7aa0bc"/><rect x="4.5" y="0.5" width="15.5" height="11" rx="1" fill="#f3ef9c" stroke="#8c8c8c"/><path d="M18 19 H24 L21 22 Z" fill="#333"/></g>
<!-- align -->
<g transform="translate(650,60)"><line x1="0.8" y1="0" x2="0.8" y2="22.5" stroke="#333" stroke-width="1.3"/><rect x="1.5" y="1.5" width="9" height="8.3" rx="1" fill="#c8f5c6" stroke="#8cc888"/><rect x="1.5" y="11.5" width="13" height="9.3" rx="1" fill="#c9e4f8" stroke="#7aa0bc"/><path d="M18 20 H24 L21 23 Z" fill="#333"/></g>
<!-- distribute -->
<g transform="translate(682,61)"><g stroke="#333" stroke-width="1.2"><line x1="0.5" y1="0" x2="0.5" y2="8"/><line x1="9.5" y1="0" x2="9.5" y2="8"/><line x1="18.5" y1="0" x2="18.5" y2="8"/></g><rect x="0.5" y="5.5" width="4.5" height="10" rx="1" fill="#c8f5c6" stroke="#8cc888"/><rect x="9.5" y="5.5" width="6.5" height="14" rx="1" fill="#c9e4f8" stroke="#7aa0bc"/><rect x="18.5" y="5.5" width="4.5" height="8.5" rx="1" fill="#c8f5c6" stroke="#8cc888"/><path d="M19 19 H25 L22 22 Z" fill="#333"/></g>
<!-- resize -->
<g transform="translate(716,61)"><rect x="0.5" y="0.5" width="11" height="19.5" rx="1" fill="#c9e4f8" stroke="#7aa0bc"/><rect x="14.5" y="0.5" width="5" height="19.5" rx="1" fill="#f3ef9c" stroke="#8c8c8c"/><path d="M0.5 8 L4 10.2 L0.5 12.4 Z M11.5 8 L8 10.2 L11.5 12.4 Z" fill="#555"/><path d="M18 19 H24 L21 22 Z" fill="#333"/></g>
<!-- atlas preview disabled -->
<g transform="translate(763,62)"><rect x="0.8" y="0.8" width="22.5" height="16.5" rx="4" fill="#f0f0ee" stroke="#cfcfcd" stroke-width="1.5"/><g stroke="#dadada" stroke-width="0.8"><line x1="1" y1="6" x2="23" y2="6"/><line x1="1" y1="12" x2="23" y2="12"/><line x1="8.5" y1="1" x2="8.5" y2="17"/><line x1="16" y1="1" x2="16" y2="17"/></g><path d="M3 4 H7 L8 7 L6 9 Z M11 4 H15 L14 10 L12 11 Z M17 4 H21 L20 7 Z" fill="#d5d5d3"/></g>
<!-- first feature disabled -->
<path d="M798 60.5 H801 V81.4 H798 Z M801.5 71 L810.8 61.5 V67.5 H817.7 V74.4 H810.8 V80.7 Z" fill="#d4d4d2"/>
<!-- chevrons -->
<g fill="none" stroke="#000" stroke-width="1.6"><path d="M842.8 69.2 L846 71.5 L842.8 73.8 M847.5 69.2 L850.7 71.5 L847.5 73.8"/><path d="M962.5 69.2 L965.7 71.5 L962.5 73.8 M967.2 69.2 L970.4 71.5 L967.2 73.8"/></g>
<!-- zoom in -->
<g transform="translate(887.2,68.3)"><line x1="-5" y1="5.5" x2="-13" y2="13.5" stroke="#2a2a2a" stroke-width="3.2"/><line x1="-7" y1="7.5" x2="-13" y2="13.5" stroke="#f2cc30" stroke-width="2.2"/><circle r="8" fill="#ececec" stroke="#909090" stroke-width="1.2"/><path d="M-5.3 0 H5.3 M0 -5.3 V5.3" stroke="#5585bd" stroke-width="2.6"/></g>
<g transform="translate(920.5,68.3)"><line x1="-5" y1="5.5" x2="-13" y2="13.5" stroke="#2a2a2a" stroke-width="3.2"/><line x1="-7" y1="7.5" x2="-13" y2="13.5" stroke="#f2cc30" stroke-width="2.2"/><circle r="8" fill="#ececec" stroke="#909090" stroke-width="1.2"/><path d="M-5.3 0 H5.3" stroke="#5585bd" stroke-width="2.6"/></g>
</svg>

<svg class="a" style="left:0;top:0" width="40" height="540">
<g fill="#aaa7a2"><rect x="13" y="96" width="1" height="1"/><rect x="16" y="96" width="1" height="1"/><rect x="19" y="96" width="1" height="1"/><rect x="22" y="96" width="1" height="1"/><rect x="25" y="96" width="1" height="1"/><rect x="28" y="96" width="1" height="1"/>
<rect x="13" y="99" width="1" height="1"/><rect x="16" y="99" width="1" height="1"/><rect x="19" y="99" width="1" height="1"/><rect x="22" y="99" width="1" height="1"/><rect x="25" y="99" width="1" height="1"/><rect x="28" y="99" width="1" height="1"/></g>
<!-- pan hand -->
<path d="M18.5 129.3 L15 122.5 L11.8 116 Q11.5 114 13.3 113.8 Q14.8 113.8 16.3 116.8 L16.6 109 Q16.8 107.2 18.4 107.2 Q20.1 107.2 20.2 109 L20.4 113.5 L20.8 109.8 Q21.2 108.5 22.5 108.6 Q23.8 108.8 23.9 110.3 L24 114.5 L24.5 111.5 Q24.9 110.4 26.1 110.5 Q27.4 110.7 27.5 112 L27.6 116 L28.1 114 Q28.6 113 29.4 113.5 Q29.9 114 29.8 115.5 L29.3 122 L27 129.3 Z" fill="#fff" stroke="#111" stroke-width="1.3" stroke-linejoin="round"/>
<!-- zoom tool -->
<rect x="9" y="140.5" width="10" height="12.5" fill="none" stroke="#111" stroke-width="1.2" stroke-dasharray="1.6 1.6"/>
<line x1="16.5" y1="154" x2="9.5" y2="161" stroke="#222" stroke-width="3.2"/><line x1="15" y1="155.5" x2="9.5" y2="161" stroke="#f0c830" stroke-width="2"/>
<circle cx="23" cy="147.4" r="8.2" fill="#ededed" stroke="#8a8a8a" stroke-width="1.2"/>
<!-- active select button -->
<rect x="4.5" y="168.5" width="31" height="29.5" rx="3" fill="#dedcd8" stroke="#bcb9b4"/>
<g fill="#333"><rect x="16" y="173.5" width="1" height="1"/><rect x="19" y="173.5" width="1" height="1"/><rect x="22" y="173.5" width="1" height="1"/><rect x="10.8" y="179" width="1" height="1"/><rect x="10.8" y="182" width="1" height="1"/><rect x="10.8" y="185" width="1" height="1"/><rect x="26" y="179" width="1" height="1"/><rect x="26" y="182" width="1" height="1"/></g>
<g fill="#fff" stroke="#444" stroke-width="0.9"><rect x="10" y="173" width="3" height="3"/><rect x="24.5" y="173" width="3" height="3"/><rect x="10" y="187.5" width="3" height="3"/><rect x="24.5" y="187.5" width="3" height="3"/></g>
<path d="M13.4 173.2 L15.7 190.6 L18.8 187.7 L22.9 194.3 L25.7 192.8 L22.3 186.5 L27.6 185.5 Z" fill="#fff" stroke="#111" stroke-width="1.1" stroke-linejoin="round"/>
<!-- move content -->
<path d="M12.5 204.5 H29.5 V224.5 H12.5 Z" fill="#ececec" stroke="#9a9a9a"/>
<path d="M10.5 206.5 Q10.5 204 12.5 204 Q14.5 204 14.5 206.5 V223 Q14.5 225 12.5 225 Q10.5 225 10.5 222.5 Z" fill="#e2e2e2" stroke="#9a9a9a"/>
<path d="M21.5 206 L26 210.5 H23.3 V214 H19.7 V210.5 H17 Z" fill="#5d8cc6" stroke="#3d6aa0" stroke-width="0.6"/>
<g fill="#5d8cc6"><rect x="15" y="213" width="2.5" height="5"/><rect x="26.5" y="214.5" width="2.5" height="3"/><rect x="20" y="220.5" width="3" height="3"/><rect x="15.5" y="219" width="2.5" height="2.5"/></g>
<!-- edit nodes -->
<g stroke="#111" stroke-width="1"><line x1="16.5" y1="237.5" x2="28.5" y2="243.5"/><line x1="16.5" y1="237.5" x2="11.5" y2="255"/></g>
<line x1="11.5" y1="255" x2="20" y2="251" stroke="#111" stroke-width="1" stroke-dasharray="1.2 1.2"/>
<path d="M19 246 L27 254 L29.5 252 L21 244 Z" fill="#c89a30" stroke="#8a6a20" stroke-width="0.5"/>
<path d="M16 255 L26 247 L28 249.5 L18 257 Z" fill="#f2d848" stroke="#b89a20" stroke-width="0.5"/>
<path d="M18 248 L26.5 242 L28 244 L20 250 Z" fill="#d0d0d0" stroke="#8a8a8a" stroke-width="0.6"/>
<g fill="#2f7fe8"><circle cx="16.5" cy="237.5" r="2.6"/><circle cx="28.5" cy="243.5" r="2.6"/><circle cx="11.5" cy="255" r="2.6"/></g>
<!-- add 3d map -->
<path d="M13.5 272 L29 270.5 L30 279 L27 285.5 L9 283 Z" fill="#dcdcdc" stroke="#b4b4b4" stroke-width="0.8"/>
<g stroke="#c0c0c0" stroke-width="0.6" fill="none"><path d="M11 278 L29 276.5"/><path d="M17 271.5 L14 284"/><path d="M23 271 L21 284.5"/><path d="M12 280.5 Q20 278 28 283"/></g>
<g id="gp1"><rect x="23.5" y="282.5" width="9" height="9" rx="2" fill="#5b9b62" stroke="#3f7a47"/><path d="M28 284.5 V289.5 M25.5 287 H30.5" stroke="#fff" stroke-width="2"/></g>
<!-- add map -->
<path d="M12.5 300.5 H29.5 V320.5 H12.5 Z" fill="#e8e8e8" stroke="#a0a0a0"/>
<path d="M10.5 302.5 Q10.5 300 12.5 300 Q14.5 300 14.5 302.5 V319 Q14.5 321 12.5 321 Q10.5 321 10.5 318.5 Z" fill="#e0e0e0" stroke="#a0a0a0"/>
<use href="#gp1" y="31.5"/>
<!-- add picture -->
<rect x="10.5" y="336.5" width="19.5" height="13" fill="#4aaeee" stroke="#888"/>
<path d="M11 341 L16 339 L29.5 345 V349.5 H11 Z" fill="#c9b24e"/>
<use href="#gp1" y="64"/>
<!-- add label -->
<rect x="10.5" y="368.5" width="19.5" height="13" fill="#f0f0f0" stroke="#9a9a9a"/>
<path d="M15.5 372.5 H25 M20.2 372.5 V379" stroke="#222" stroke-width="1.4"/>
<use href="#gp1" y="96"/>
<!-- add legend -->
<rect x="11" y="398" width="4.5" height="4.5" fill="#f8c400" stroke="#e08a00" stroke-width="0.8"/>
<rect x="11" y="404" width="4.5" height="4.5" fill="#e03c00" stroke="#b82800" stroke-width="0.8"/>
<rect x="11" y="410" width="4.5" height="4.5" fill="#00a356" stroke="#006a30" stroke-width="0.8"/>
<g stroke="#9a9a9a" stroke-width="1.5"><line x1="17" y1="402" x2="23" y2="402"/><line x1="17" y1="408" x2="26" y2="408"/><line x1="17" y1="414" x2="21" y2="414"/></g>
<use href="#gp1" y="128"/>
<!-- scale bar -->
<rect x="9.5" y="436" width="21.5" height="4.5" rx="1.5" fill="#333"/>
<g fill="#fff"><rect x="14.5" y="437.4" width="4" height="1.8"/><rect x="23" y="437.4" width="4" height="1.8"/></g>
<g fill="#a0a0a0"><rect x="11" y="437.4" width="3.5" height="1.8"/><rect x="18.5" y="437.4" width="4.5" height="1.8"/><rect x="27" y="437.4" width="3" height="1.8"/></g>
<use href="#gp1" y="160"/>
<!-- north arrow -->
<path d="M20 461 L12 481 L21.5 476 Z" fill="#4a7ec0"/><path d="M20 461 L24 473 L21.5 476 Z" fill="#6f9bd6"/>
<text x="17" y="475" font-family="Liberation Sans" font-size="7" font-weight="bold" fill="#fff">N</text>
<rect x="22.5" y="473.5" width="9.5" height="9.5" rx="2" fill="#5b9b62" stroke="#3f7a47"/><path d="M27.2 475.5 V481 M24.5 478.2 H30" stroke="#fff" stroke-width="2"/>
<!-- more -->
<path d="M17.2 497.2 L20 499.6 L22.8 497.2 M17.2 501.6 L20 504 L22.8 501.6" fill="none" stroke="#000" stroke-width="1.5"/>
</svg>

<div class="a" style="left:601px;top:91px;width:375px;height:419px;background:#efedea"></div>
<svg class="a" style="left:603px;top:292px" width="3" height="20"><g fill="#9a9792"><rect x="1" y="2" width="1" height="1"/><rect x="1" y="5" width="1" height="1"/><rect x="1" y="8" width="1" height="1"/><rect x="1" y="11" width="1" height="1"/><rect x="1" y="14" width="1" height="1"/><rect x="1" y="17" width="1" height="1"/></g></svg>
<div class="a pt" style="left:611px;top:92px">Items</div>
<svg class="a" style="left:600px;top:90px" width="376" height="420">
<defs><g id="dockbtn"><rect x="0.5" y="0.5" width="10" height="10" rx="2" fill="#efedea" stroke="#6a6a6a"/><rect x="4.5" y="2.3" width="4" height="4" rx="1" fill="none" stroke="#555" stroke-width="0.9"/><rect x="2.5" y="4.5" width="4" height="4" rx="1" fill="#efedea" stroke="#555" stroke-width="0.9"/></g>
<g id="dockx"><rect x="0.5" y="0.5" width="10" height="10" rx="2" fill="#efedea" stroke="#6a6a6a"/><path d="M2.8 2.8 L8.2 8.2 M8.2 2.8 L2.8 8.2" stroke="#333" stroke-width="1.6"/></g></defs>
<use href="#dockbtn" x="349" y="5"/><use href="#dockx" x="363" y="5"/>
<use href="#dockbtn" x="349" y="154"/><use href="#dockx" x="363" y="154"/>
</svg>
<!-- tree -->
<div class="a" style="left:607px;top:110px;width:369px;height:95px;background:#fff;border:1px solid #b3afa9"></div>
<div class="a" style="left:608px;top:111px;width:367px;height:21px;background:linear-gradient(#f8f7f5,#efedea);border-bottom:1px solid #cdc9c4"></div>
<div class="a" style="left:664px;top:111px;width:1px;height:20px;background:#d4d0cb"></div>
<div class="a" style="left:721px;top:111px;width:1px;height:20px;background:#d4d0cb"></div>
<div class="a tx" style="left:724px;top:113px">Item</div>
<div class="a" style="left:608px;top:132px;width:367px;height:19px;background:#3089c8"></div>
<svg class="a" style="left:600px;top:106px" width="376" height="100">
<!-- eye -->
<g transform="translate(17,14.8)"><path d="M-6.5 0 Q0 -7 7.5 0.5 Q0 6 -6.5 0 Z" fill="#f4f4f4" stroke="#8c8c8c" stroke-width="0.9"/><circle cx="0" cy="0" r="3.2" fill="#9a9a9a"/><circle cx="0.3" cy="-0.2" r="1.3" fill="#111"/><path d="M-5 -3.8 Q1 -6.5 6.5 -3" fill="none" stroke="#aaa" stroke-width="0.7"/></g>
<!-- lock -->
<path d="M71.8 16 V12.5 Q71.8 8.3 75.3 8.3 Q78.8 8.3 78.8 12.5 V16" fill="none" stroke="#666" stroke-width="1.5"/>
<rect x="69.2" y="15.8" width="11.8" height="6.8" rx="1.5" fill="#626262"/>
<!-- checkboxes -->
<g fill="#fff" stroke="#9c9893"><rect x="11.5" y="28.5" width="13" height="13" rx="1"/><rect x="11.5" y="47.5" width="13" height="13" rx="1"/><rect x="11.5" y="66.5" width="13" height="13" rx="1"/><rect x="68.5" y="28.5" width="13" height="13" rx="1"/><rect x="68.5" y="47.5" width="13" height="13" rx="1"/><rect x="68.5" y="66.5" width="13" height="13" rx="1"/></g>
<g fill="none" stroke="#000" stroke-width="2" stroke-linejoin="miter"><path d="M14.6 35 L17.4 39 L21.8 31"/><path d="M14.6 54 L17.4 58 L21.8 50"/><path d="M14.6 73 L17.4 77 L21.8 69"/></g>
<!-- legend icon -->
<g fill="#e6e6e6" stroke="#444" stroke-width="0.9"><rect x="126.5" y="29.3" width="3" height="3"/><rect x="126.5" y="34.3" width="3" height="3"/><rect x="126.5" y="39.3" width="3" height="3"/></g>
<g stroke="#b4b4b4" stroke-width="1.5"><line x1="131" y1="30.8" x2="136" y2="30.8"/><line x1="131" y1="35.8" x2="140" y2="35.8"/><line x1="131" y1="40.8" x2="136" y2="40.8"/></g>
<!-- T icon -->
<rect x="126.5" y="48.5" width="13" height="11" rx="0.8" fill="#efefef" stroke="#8c8c8c"/>
<path d="M129.5 51 H136.5 M133 51 V57.5 M131.8 57.5 H134.2" stroke="#222" stroke-width="1.1" fill="none"/>
<!-- map icon -->
<defs><linearGradient id="mg" x1="0" x2="1"><stop offset="0" stop-color="#f4f4f4"/><stop offset="1" stop-color="#c8c8c8"/></linearGradient></defs>
<rect x="126.5" y="67.5" width="13" height="11.5" fill="url(#mg)" stroke="#9a9a9a"/>
<path d="M126.5 67 Q127.8 66 129 67 V79 Q127.8 80 126.5 79 Z" fill="#dcdcdc" stroke="#9a9a9a" stroke-width="0.7"/>
</svg>
<div class="a tx" style="left:747px;top:132px;color:#fff;font-weight:bold;font-size:14.6px">Legend</div>
<div class="a tx" style="left:747px;top:151px">Swellendam</div>
<div class="a tx" style="left:747px;top:170px">Map 1</div>
<svg class="a" style="left:780px;top:206px" width="30" height="4"><g fill="#9a9792"><rect x="5" y="1" width="1" height="1"/><rect x="8" y="1" width="1" height="1"/><rect x="11" y="1" width="1" height="1"/><rect x="14" y="1" width="1" height="1"/><rect x="17" y="1" width="1" height="1"/><rect x="20" y="1" width="1" height="1"/></g></svg>
<!-- tabs -->
<div class="a" style="left:607px;top:238px;width:369px;height:1px;background:#bdb9b3"></div>
<div class="a tab" style="left:607px;top:213px;width:72px;text-indent:-2px">Layout</div>
<div class="a tab" style="left:809px;top:213px;width:71px">Guides</div>
<div class="a tab act" style="left:678px;top:211px;width:132px">Item Properties</div>
<div class="a pt" style="left:611px;top:241px;letter-spacing:0.3px">Item Properties</div>
<div class="a" style="left:608px;top:259px;width:368px;height:21px;background:#c6c6c6"></div>
<div class="a tx" style="left:613px;top:261px;font-weight:bold">Legend</div>
<!-- scroll area -->
<div class="a" style="left:607px;top:280px;width:369px;height:229px;border:1px solid #bdb9b3;border-right:none;background:#efedea"></div>
<svg class="a" style="left:600px;top:280px" width="376" height="230">
<path d="M22 19 H32.5 L27.25 26.2 Z" fill="#3a3a3a"/>
<rect x="20.5" y="33.5" width="345" height="173" rx="2" fill="#ebe9e5" stroke="#d6d3ce"/>
<!-- vertical scrollbar -->
<rect x="361" y="1" width="15" height="215" fill="#dcdad6"/>
<rect x="361.5" y="1.5" width="14" height="13" fill="#f7f6f4" stroke="#c8c5c0"/>
<path d="M364.5 10.5 H372.5 L368.5 6 Z" fill="#333"/>
<rect x="361.5" y="14.5" width="14" height="41" fill="#f8f7f5" stroke="#c8c5c0"/>
<rect x="361.5" y="201.5" width="14" height="14" fill="#f7f6f4" stroke="#c8c5c0"/>
<path d="M364.5 205.5 H372.5 L368.5 210 Z" fill="#333"/>
<!-- horizontal scrollbar -->
<rect x="8" y="215.5" width="353" height="13" fill="#f6f5f3" stroke="#c8c5c0"/>
<rect x="8.5" y="215.5" width="14" height="13" fill="#f6f5f3" stroke="#c8c5c0"/>
<path d="M18.5 218 V226 L13.5 222 Z" fill="#333"/>
<rect x="327.5" y="215.5" width="20" height="13" fill="#dcdad6" stroke="#c8c5c0"/>
<rect x="347.5" y="215.5" width="13.5" height="13" fill="#f6f5f3" stroke="#c8c5c0"/>
<path d="M351.5 218 V226 L356.5 222 Z" fill="#333"/>
<rect x="361" y="216" width="15" height="13" fill="#efedea"/>
</svg>
<div class="a tx" style="left:642px;top:292px;font-weight:bold">Main Properties</div>
<div class="a tx" style="left:633px;top:331px"><span style="text-decoration:underline;text-underline-offset:2px">T</span>itle</div>
<div class="a tx" style="left:633px;top:363px">Map</div>
<div class="a tx" style="left:633px;top:394px">Wrap text on</div>
<div class="a tx" style="left:633px;top:425px">Arrangement</div>
<div class="a tx" style="left:652px;top:455px">Resize to fit contents</div>
<div class="a inp" style="left:730px;top:327px;width:191px;height:24px"><span class="tx a" style="left:3px;top:3px">Legend</span></div>
<div class="a cmb" style="left:730px;top:358px;width:227px;height:25px"><span class="tx a" style="left:25px;top:3px">Map 1</span></div>
<div class="a inp" style="left:730px;top:389px;width:227px;height:25px"></div>
<div class="a cmb" style="left:731px;top:420px;width:226px;height:25px"><span class="tx a" style="left:24px;top:3px">Symbols on Left</span></div>
<svg class="a" style="left:600px;top:320px" width="376" height="160">
<!-- title button icon -->
<path d="M331 19 L336 14 V23.5 Z" fill="#8a8a8a"/>
<rect x="336.5" y="12" width="12" height="11" fill="#fff" stroke="#555"/>
<path d="M339 15.5 H346 M339 20 H346" stroke="#555" stroke-width="1.2"/>
<path d="M344 23 H354 L349 27 Z" fill="#333"/>
<!-- combo arrows -->
<path d="M341 48 H351 L346 53 Z" fill="#333"/>
<path d="M341 110 H351 L346 115 Z" fill="#333"/>
<!-- map icon -->
<rect x="139.5" y="44.5" width="12" height="11" fill="url(#mg)" stroke="#9a9a9a"/>
<path d="M137.5 44.5 Q138.8 43.5 140 44.5 V56 Q138.8 57 137.5 56 Z" fill="#dcdcdc" stroke="#9a9a9a" stroke-width="0.7"/>
<!-- arrangement icon -->
<g fill="#fff" stroke="#555" stroke-width="0.8"><rect x="137.5" y="106.5" width="2.5" height="2.5"/><rect x="137.5" y="111" width="2.5" height="2.5"/><rect x="137.5" y="115.5" width="2.5" height="2.5"/></g>
<g stroke="#9a9a9a" stroke-width="1.2"><line x1="142" y1="107.8" x2="147" y2="107.8"/><line x1="142" y1="112.3" x2="148" y2="112.3"/><line x1="142" y1="116.8" x2="146" y2="116.8"/></g>
<!-- checkbox -->
<rect x="34.5" y="135.5" width="12" height="13" rx="1" fill="#fff" stroke="#9c9893"/>
<path d="M36.8 142 L39.5 146 L43.8 138" fill="none" stroke="#000" stroke-width="1.8"/>
</svg>

<div id="status" class="a">
<span style="left:387px">x: 243.36 mm</span>
<span style="left:492px">y: 29.2763 mm</span>
<span style="left:599px">page: 1</span>
<div class="a" style="left:705px;top:3px;width:141px;height:25px;background:#fff;border:1px solid #bcb8b2;border-radius:3px;overflow:hidden"><div class="a" style="left:119px;top:0;width:21px;height:23px;background:linear-gradient(#f6f5f3,#ebe9e6);border-left:1px solid #cfcbc6"></div><span style="position:absolute;left:4px;top:3px;font-size:15px;color:#1a1a1a">43.4%</span></div>
<svg class="a" style="left:820px;top:0" width="156" height="30">
<path d="M13.5 15 H21.5 L17.5 19.5 Z" fill="#333"/>
<rect x="34.5" y="13.5" width="96" height="5" rx="2.5" fill="#dcdad6" stroke="#b5b2ad"/>
<rect x="34.5" y="13.5" width="5" height="5" rx="2.5" fill="#3a8fd0" stroke="#2a70a8"/>
<rect x="36" y="10" width="13" height="12" rx="3" fill="#f8f7f5" stroke="#a9a6a1"/>
<g fill="#b8b5b0"><rect x="152" y="17" width="1" height="1"/><rect x="149" y="20" width="1" height="1"/><rect x="152" y="20" width="1" height="1"/><rect x="146" y="23" width="1" height="1"/><rect x="149" y="23" width="1" height="1"/><rect x="152" y="23" width="1" height="1"/><rect x="143" y="26" width="1" height="1"/><rect x="146" y="26" width="1" height="1"/><rect x="149" y="26" width="1" height="1"/><rect x="152" y="26" width="1" height="1"/></g>
</svg>
</div>
</body></html>
